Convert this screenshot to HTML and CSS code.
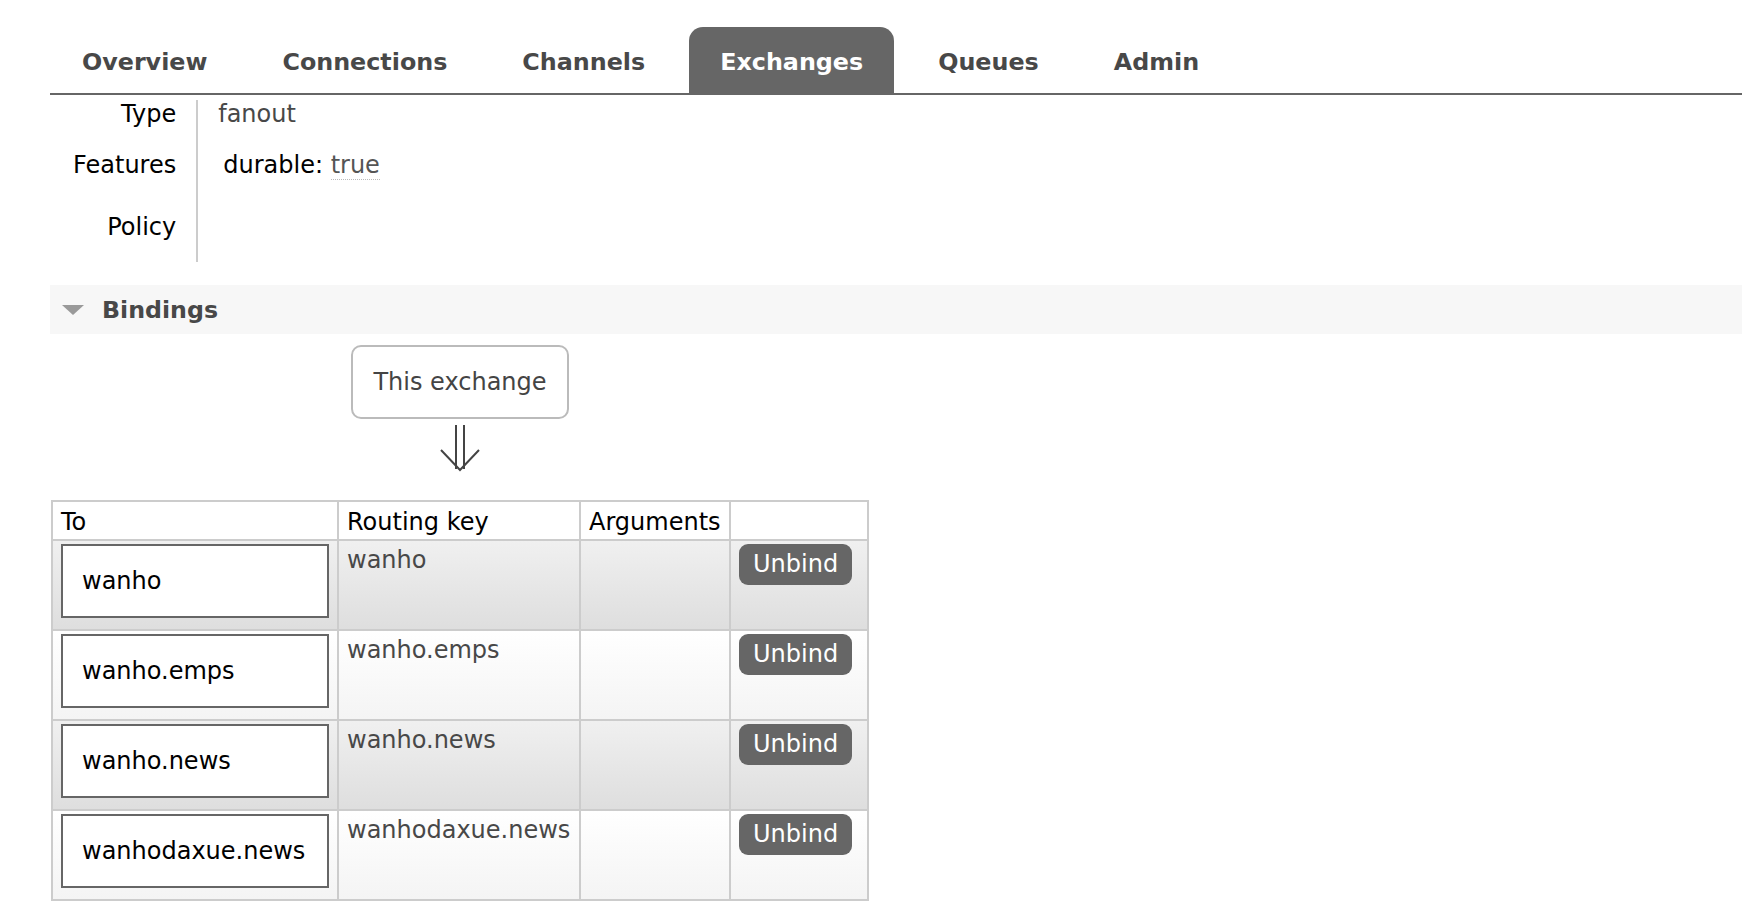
FILE: index.html
```html
<!DOCTYPE html>
<html>
<head>
<meta charset="utf-8">
<title>Exchange</title>
<link rel="stylesheet" href="styles.css">
</head>
<body>
<div class="page">
  <nav class="menu">
    <ul class="tabs">
      <li><a class="tab">Overview</a></li>
      <li><a class="tab">Connections</a></li>
      <li><a class="tab">Channels</a></li>
      <li><a class="tab selected">Exchanges</a></li>
      <li><a class="tab">Queues</a></li>
      <li><a class="tab">Admin</a></li>
    </ul>
  </nav>

  <table class="facts">
    <tr>
      <th>Type</th>
      <td class="value">fanout</td>
    </tr>
    <tr>
      <th>Features</th>
      <td class="value features"><span class="key">durable:</span> <abbr class="flag">true</abbr></td>
    </tr>
    <tr class="last">
      <th>Policy</th>
      <td class="value"></td>
    </tr>
  </table>

  <div class="section">
    <h2 class="section-title"><span class="toggle"></span>Bindings</h2>
    <div class="bindings-wrapper">
      <div class="endpoint"><span class="exchange">This exchange</span></div>
      <div class="arrow">
        <svg width="40" height="48" viewBox="0 0 40 48">
          <path d="M16 1 V45 M24 1 V45" stroke="#444" stroke-width="2" fill="none"/>
          <path d="M1 26 L20 46 L39 26" stroke="#444" stroke-width="2" fill="none" stroke-linejoin="miter"/>
        </svg>
      </div>
      <table class="list">
        <colgroup>
          <col class="c-to"><col class="c-key"><col class="c-args"><col class="c-act">
        </colgroup>
        <thead>
          <tr><th>To</th><th>Routing key</th><th>Arguments</th><th></th></tr>
        </thead>
        <tbody>
          <tr class="alt1">
            <td><span class="queue">wanho</span></td>
            <td class="key-cell">wanho</td>
            <td></td>
            <td><button class="btn">Unbind</button></td>
          </tr>
          <tr class="alt2">
            <td><span class="queue">wanho.emps</span></td>
            <td class="key-cell">wanho.emps</td>
            <td></td>
            <td><button class="btn">Unbind</button></td>
          </tr>
          <tr class="alt1">
            <td><span class="queue">wanho.news</span></td>
            <td class="key-cell">wanho.news</td>
            <td></td>
            <td><button class="btn">Unbind</button></td>
          </tr>
          <tr class="alt2">
            <td><span class="queue">wanhodaxue.news</span></td>
            <td class="key-cell">wanhodaxue.news</td>
            <td></td>
            <td><button class="btn">Unbind</button></td>
          </tr>
        </tbody>
      </table>
    </div>
  </div>
</div>
</body>
</html>
```

FILE: styles.css
```css
html, body {
  margin: 0;
  padding: 0;
  background: #fff;
}

body {
  font-family: "DejaVu Sans", Verdana, sans-serif;
  font-size: 24px;
  line-height: 28px;
  color: #484848;
}

.page {
  padding: 27px 0 0 50px;
}

/* ---------- menu ---------- */
.tabs {
  list-style: none;
  margin: 0;
  padding: 0 0 0 1px;
  display: flex;
  border-bottom: 2px solid #666;
}

.tabs li {
  margin-right: 13px;
}

.tab {
  display: block;
  padding: 21px 31px 17px 31px;
  font-weight: bold;
  font-size: 23.8px;
  line-height: 28px;
  color: #484848;
  border-radius: 14px 14px 0 0;
}

.tab.selected {
  background: #666;
  color: #fff;
}

/* ---------- facts ---------- */
.facts {
  border-collapse: collapse;
  margin-top: 5px;
  margin-left: 3px;
}

.facts th,
.facts td {
  padding: 0 20px 22px 20px;
  vertical-align: top;
  line-height: 29px;
  font-weight: normal;
}

.facts th {
  text-align: right;
  color: #000;
  border-right: 2px solid #ccc;
}

.facts td {
  text-align: left;
}

.facts td.features {
  padding-left: 25px;
  padding-bottom: 33px;
}

.facts tr.last th,
.facts tr.last td {
  padding-bottom: 20px;
}

.key {
  color: #000;
}

.flag {
  text-decoration: none;
  color: #555;
  border-bottom: 1px dotted #bbb;
}

/* ---------- section ---------- */
.section {
  margin-top: 23px;
}

.section-title {
  margin: 0;
  height: 49px;
  display: flex;
  align-items: center;
  background: #f7f7f7;
  font-size: 23.7px;
  font-weight: bold;
  color: #484848;
  padding-left: 12px;
}

.toggle {
  width: 0;
  height: 0;
  border-left: 11px solid transparent;
  border-right: 11px solid transparent;
  border-top: 10px solid #9a9a9a;
  margin-right: 18px;
  margin-top: 1px;
}

.bindings-wrapper {
  display: inline-block;
  text-align: center;
  margin-top: 11px;
  margin-left: 1px;
}

.endpoint {
  display: flex;
  justify-content: center;
}

.exchange {
  display: inline-block;
  border: 2px solid #bbb;
  border-radius: 10px;
  padding: 21px 20px;
  line-height: 28px;
  color: #444;
  background: #fff;
}

.arrow {
  height: 81px;
  display: flex;
  justify-content: center;
  align-items: flex-start;
}

.arrow svg {
  margin-top: 5px;
}

/* ---------- list table ---------- */
.list {
  border-collapse: collapse;
  table-layout: fixed;
  width: 816px;
  text-align: left;
}

.c-to { width: 286px; }
.c-key { width: 242px; }
.c-args { width: 150px; }
.c-act { width: 138px; }

.list th,
.list td {
  border: 2px solid #ccc;
  vertical-align: top;
}

.list th {
  font-weight: normal;
  color: #000;
  padding: 6px 8px 3px 8px;
  line-height: 28px;
  background: #fff;
}

.list td {
  padding: 3px 8px 11px 8px;
  line-height: 28px;
}

.list tr.alt1 td {
  background: linear-gradient(#f0f0f0, #dedede);
}

.list tr.alt2 td {
  background: linear-gradient(#ffffff, #f4f4f4);
}

.key-cell {
  color: #484848;
}

.list td.key-cell {
  padding-top: 5px;
  padding-bottom: 9px;
  white-space: nowrap;
}

.queue {
  display: block;
  box-sizing: border-box;
  height: 74px;
  border: 2px solid #666;
  background: #fff;
  padding: 21px 19px;
  color: #000;
  white-space: nowrap;
}

.btn {
  display: inline-block;
  font-family: "DejaVu Sans", Verdana, sans-serif;
  font-size: 24px;
  line-height: 28px;
  color: #fff;
  background: #666;
  border: none;
  border-radius: 9px;
  padding: 6px 14px 7px 14px;
  margin: 0;
}
```
